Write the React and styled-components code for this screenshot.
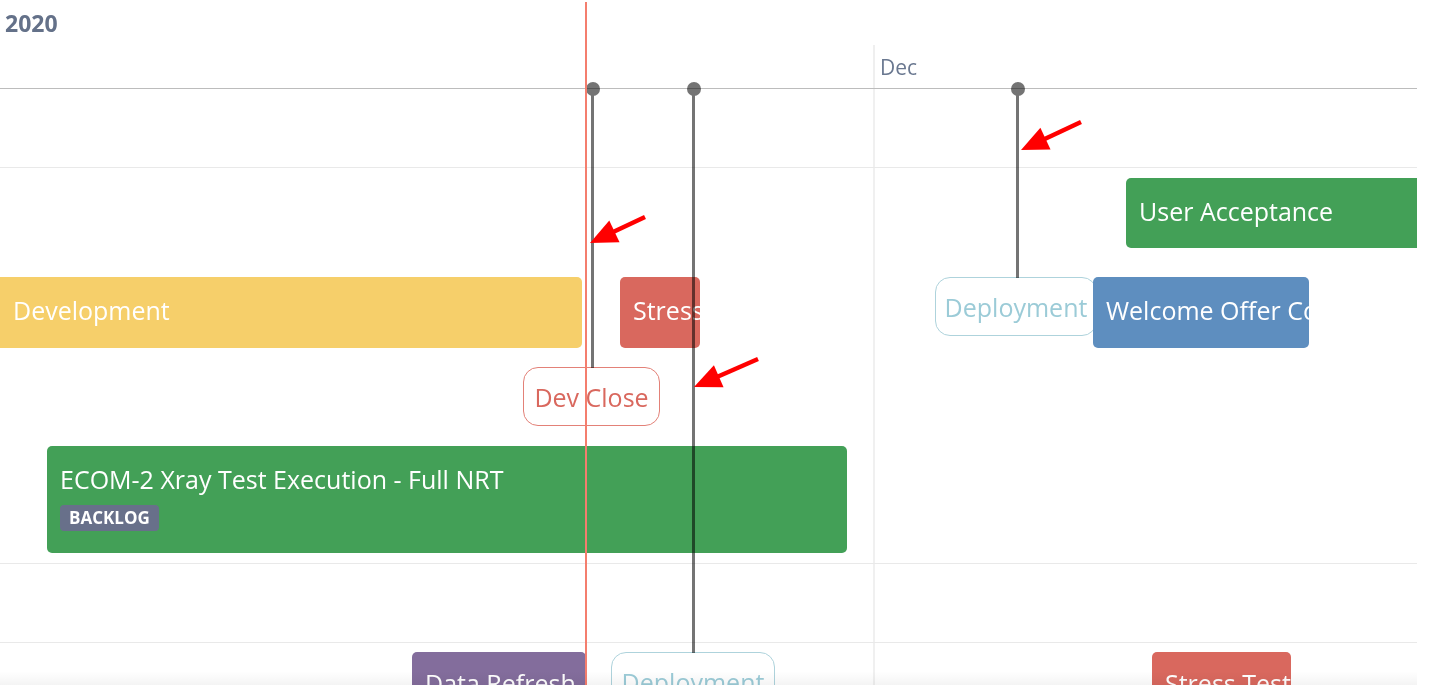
import React from "react";
import styled, { createGlobalStyle } from "styled-components";

const Global = createGlobalStyle`
  html, body { margin: 0; padding: 0; background: #fff; }
  body { font-family: "Open Sans", "Noto Sans", sans-serif; overflow: hidden; }
  #root { width: 1435px; height: 685px; }
`;

const Page = styled.div`
  position: relative;
  width: 1435px;
  height: 685px;
  overflow: hidden;
  background: #fff;
`;

const Timeline = styled.div`
  position: relative;
  width: 1417px;
  height: 685px;
  overflow: hidden;
  display: flex;
  flex-direction: column;
`;

const YearRow = styled.div`
  flex: none;
  height: 45px;
  display: flex;
  align-items: center;
  padding-left: 5px;
  padding-top: 1px;
  box-sizing: border-box;
  font-size: 23px;
  font-weight: 700;
  color: #647189;
`;

const MonthRow = styled.div`
  flex: none;
  position: relative;
  height: 44px;
  border-bottom: 1px solid #bcbcbc;
  box-sizing: border-box;
`;

const MonthCell = styled.div`
  position: absolute;
  top: 0;
  bottom: 0;
  left: ${(p) => p.$x}px;
  border-left: 2px solid #efefef;
  padding: 8px 0 0 5px;
  font-size: 21px;
  color: #6a7890;
`;

const Body = styled.div`
  flex: none;
  position: relative;
  display: flex;
  flex-direction: column;
`;

const GridLine = styled.div`
  position: absolute;
  top: 0;
  bottom: 0;
  left: ${(p) => p.$x}px;
  width: 2px;
  background: #f0f0f0;
`;

const Lane = styled.div`
  position: relative;
  height: ${(p) => p.$h}px;
  flex: none;
  border-bottom: 1px solid #e9e9e9;
`;

const Bar = styled.div`
  position: absolute;
  left: ${(p) => p.$x}px;
  top: ${(p) => p.$y}px;
  width: ${(p) => p.$w}px;
  height: ${(p) => p.$h}px;
  background: ${(p) => p.$color};
  border-radius: 5px;
  box-sizing: border-box;
  padding: 0 0 5px ${(p) => p.$pad ?? 13}px;
  display: flex;
  flex-direction: column;
  justify-content: center;
  gap: 10px;
  overflow: hidden;
  z-index: 2;
`;

const BarTitle = styled.div`
  color: #fff;
  font-size: 25px;
  line-height: 32px;
  white-space: nowrap;
`;

const Badge = styled.span`
  align-self: flex-start;
  background: #68708a;
  color: #fff;
  font-size: 17px;
  font-weight: 700;
  line-height: 26px;
  padding: 0 9px;
  border-radius: 4px;
`;

const Milestone = styled.div`
  position: absolute;
  left: ${(p) => p.$x}px;
  top: ${(p) => p.$y}px;
  width: ${(p) => p.$w}px;
  height: 59px;
  box-sizing: border-box;
  border: 1px solid ${(p) => p.$border};
  border-radius: 15px;
  background: #fff;
  color: ${(p) => p.$color};
  font-size: 25px;
  display: flex;
  align-items: center;
  justify-content: center;
  white-space: nowrap;
  z-index: 1;
`;

const Stem = styled.div`
  position: absolute;
  left: ${(p) => p.$x - 1}px;
  top: 0;
  width: 3px;
  height: ${(p) => p.$len}px;
  background: #747474;
  z-index: 3;
  mix-blend-mode: multiply;
  &::before {
    content: "";
    position: absolute;
    left: -5.5px;
    top: -7px;
    width: 14px;
    height: 14px;
    border-radius: 50%;
    background: #747474;
  }
`;

const TodayLine = styled.div`
  position: absolute;
  left: 585px;
  top: 2px;
  bottom: 0;
  width: 2px;
  background: #f47e6e;
  z-index: 5;
`;

const BottomFade = styled.div`
  position: absolute;
  left: 0;
  right: 18px;
  bottom: 0;
  height: 14px;
  background: linear-gradient(to bottom, rgba(0, 0, 0, 0), rgba(0, 0, 0, 0.045));
  z-index: 6;
`;

const Annotations = styled.svg`
  position: absolute;
  left: 0;
  top: 0;
  width: 1435px;
  height: 685px;
  z-index: 7;
  pointer-events: none;
`;

const GREEN = "#43a057";
const YELLOW = "#f6cf6a";
const RED = "#d9685e";
const BLUE = "#5e8ebf";
const PURPLE = "#836d9c";
const TEAL_BORDER = "#aed3dc";
const TEAL_TEXT = "#9bcbd7";

function Arrow({ x1, y1, x2, y2 }) {
  const dx = x2 - x1;
  const dy = y2 - y1;
  const len = Math.hypot(dx, dy);
  const ux = dx / len;
  const uy = dy / len;
  const hl = 27;
  const hw = 12;
  const bx = x2 - ux * hl;
  const by = y2 - uy * hl;
  const px = -uy;
  const py = ux;
  const pts = `${x2},${y2} ${bx + px * hw},${by + py * hw} ${bx - px * hw},${by - py * hw}`;
  return (
    <g>
      <line x1={x1} y1={y1} x2={bx + ux * 2} y2={by + uy * 2} stroke="#ff0000" strokeWidth="4.5" />
      <polygon points={pts} fill="#ff0000" />
    </g>
  );
}

export default function App() {
  return (
    <Page>
      <Global />
      <Timeline>
        <YearRow>2020</YearRow>
        <MonthRow>
          <MonthCell $x={873}>Dec</MonthCell>
        </MonthRow>
        <Body>
          <GridLine $x={873} />
          <Stem $x={592} $len={279} />
          <Stem $x={693} $len={564} />
          <Stem $x={1017} $len={189} />

          <Lane $h={78} />

          <Lane $h={395}>
            <Bar $x={1126} $y={10} $w={320} $h={70} $color={GREEN}>
              <BarTitle>User Acceptance</BarTitle>
            </Bar>
            <Bar $x={-6} $y={109} $w={588} $h={71} $pad={19} $color={YELLOW}>
              <BarTitle>Development</BarTitle>
            </Bar>
            <Bar $x={620} $y={109} $w={80} $h={71} $color={RED}>
              <BarTitle>Stress Test</BarTitle>
            </Bar>
            <Milestone $x={935} $y={109} $w={162} $border={TEAL_BORDER} $color={TEAL_TEXT}>
              Deployment
            </Milestone>
            <Bar $x={1093} $y={109} $w={216} $h={71} $color={BLUE}>
              <BarTitle>Welcome Offer Communication</BarTitle>
            </Bar>
            <Milestone $x={523} $y={199} $w={137} $border="#e38178" $color="#d9685e">
              Dev Close
            </Milestone>
            <Bar $x={47} $y={278} $w={800} $h={107} $color={GREEN}>
              <BarTitle>ECOM-2 Xray Test Execution - Full NRT</BarTitle>
              <Badge>BACKLOG</Badge>
            </Bar>
          </Lane>

          <Lane $h={78} />

          <Lane $h={100}>
            <Bar $x={412} $y={9} $w={174} $h={66} $color={PURPLE}>
              <BarTitle>Data Refresh</BarTitle>
            </Bar>
            <Milestone $x={611} $y={9} $w={164} $border={TEAL_BORDER} $color={TEAL_TEXT}>
              Deployment
            </Milestone>
            <Bar $x={1152} $y={9} $w={139} $h={66} $color={RED}>
              <BarTitle>Stress Test</BarTitle>
            </Bar>
          </Lane>
        </Body>
        <TodayLine />
      </Timeline>
      <BottomFade />
      <Annotations viewBox="0 0 1435 685">
        <Arrow x1={645} y1={217} x2={590} y2={243} />
        <Arrow x1={758} y1={359} x2={694} y2={387} />
        <Arrow x1={1081} y1={122} x2={1021} y2={150} />
      </Annotations>
    </Page>
  );
}
